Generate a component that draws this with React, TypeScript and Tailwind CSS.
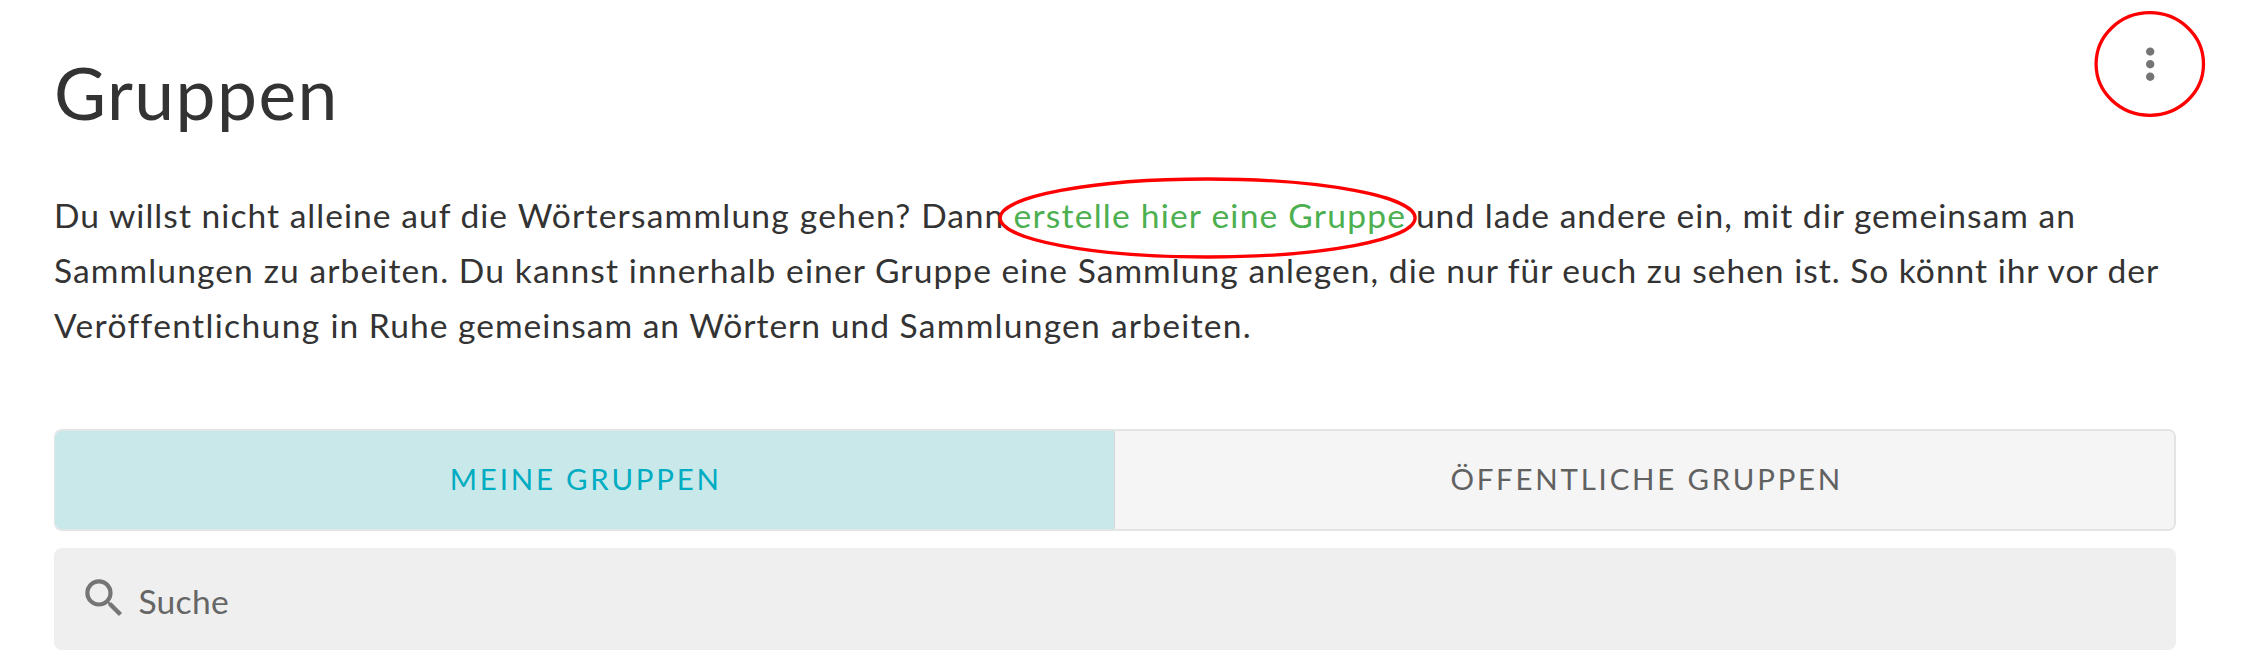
export default function App() {
  return (
    <main className="relative h-[663px] w-full overflow-hidden bg-white pl-[54px] pr-[68px] font-['Lato',sans-serif] text-[#333]">
      <header className="flex h-[188px] items-start justify-between pt-[47px]">
        <h1 className="text-[71.4px] leading-[92px] tracking-[1.4px]">Gruppen</h1>
        <button className="-mt-[8px] flex w-[52px] justify-center" aria-label="Menü">
          <svg width="50.4" height="50.4" viewBox="0 0 24 24" fill="#757575"><path d="M12 8c1.1 0 2-.9 2-2s-.9-2-2-2-2 .9-2 2 .9 2 2 2zm0 2c-1.1 0-2 .9-2 2s.9 2 2 2 2-.9 2-2-.9-2-2-2zm0 6c-1.1 0-2 .9-2 2s.9 2 2 2 2-.9 2-2-.9-2-2-2z" /></svg>
        </button>
      </header>
      <p className="h-[241px] whitespace-nowrap text-[33.6px] leading-[55.2px] tracking-[1.05px]">
        <span className="tracking-[1.02px]">Du willst nicht alleine auf die </span><span className="tracking-[1.22px]">Wörtersammlung gehen? </span><span className="tracking-[0.85px]">Dann </span><a className="tracking-[1.22px] text-[#4caf50]">erstelle hier eine Gruppe</a><span className="tracking-[1.02px]"> und lade andere ein, mit dir gemeinsam an</span><br />
        <span className="tracking-[1.1px]">Sammlungen zu arbeiten. Du kannst innerhalb einer </span>Gruppe eine Sammlung anlegen, die <span className="tracking-[0.97px]">nur für euch zu sehen ist. So könnt ihr vor der</span><br />
        <span className="tracking-[1.34px]">Veröffentlichung </span><span className="tracking-[1.01px]">in Ruhe gemeinsam an Wörtern und </span><span className="tracking-[1.25px]">Sammlungen arbeiten.</span>
      </p>
      <div className="flex h-[102px] overflow-hidden rounded-lg border-2 border-l border-[#e3e5e5] text-[29.4px] tracking-[2.8px]">
        <button className="w-1/2 border-r border-[#d5d9da] bg-[#c9e8ea] pb-[1px] pl-[3px] text-[#00acc1]">MEINE GRUPPEN</button>
        <button className="w-1/2 bg-[#f5f5f5] pb-[1px] pl-[5px] text-[#616161]">ÖFFENTLICHE GRUPPEN</button>
      </div>
      <div className="mt-[17px] flex h-[102px] items-center rounded-lg bg-[#efefef] pl-[25px] text-[33.6px] tracking-[0.3px] text-[#666]">
        <svg className="mb-[2px]" width="50.4" height="50.4" viewBox="0 0 24 24" fill="#757575"><path d="M15.5 14h-.79l-.28-.27A6.47 6.47 0 0 0 16 9.5 6.5 6.5 0 1 0 9.5 16c1.61 0 3.09-.59 4.23-1.57l.27.28v.79l5 4.99L20.49 19l-4.99-5zm-6 0C7.01 14 5 11.99 5 9.5S7.01 5 9.5 5 14 7.01 14 9.5 11.99 14 9.5 14z" /></svg>
        <span className="ml-[9px] pt-[4px]">Suche</span>
      </div>
      <svg className="pointer-events-none absolute left-0 top-0" width="2244" height="663" fill="none" stroke="#ff0000" strokeWidth="3.3"><ellipse cx="1207.6" cy="218" rx="207.5" ry="39" /><ellipse cx="2149.8" cy="64" rx="53.7" ry="51.3" /></svg>
    </main>
  );
}
